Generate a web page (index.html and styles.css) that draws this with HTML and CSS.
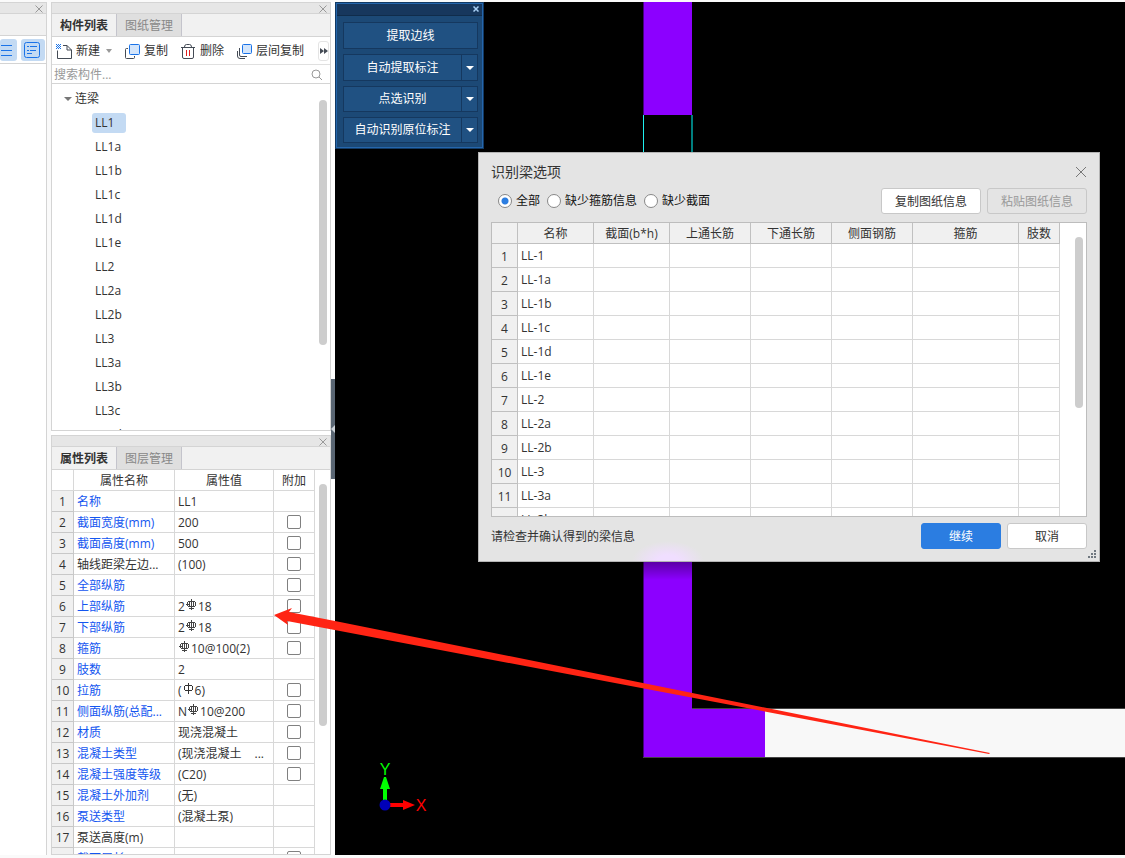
FILE: index.html
```html
<!DOCTYPE html>
<html lang="zh-CN">
<head>
<meta charset="utf-8">
<title>识别梁选项</title>
<link rel="stylesheet" href="styles.css">
</head>
<body>
<svg class="defs" aria-hidden="true">
  <symbol id="x" viewBox="0 0 10 10"><path d="M1.500 2.500l7 7M8.500 2.500l-7 7" fill="none" stroke="currentColor"/></symbol>
  <symbol id="hrb" viewBox="0 0 10 12"><path d="M5.500 0v11M2 2.500h7M1.500 3v4M9.500 3v4M2 7.500h7M3.500 2v6M7.500 2v6M0 5.500h3M3 9.500h5" fill="none" stroke="#444"/></symbol>
  <symbol id="hpb" viewBox="0 0 10 12"><path d="M5.500 0v11M2 2.500h7M1.500 3v4M9.500 3v4M2 7.500h7" fill="none" stroke="#333"/></symbol>
</svg>

<aside class="strip">
  <div class="dock-bar"><button class="close" aria-label="关闭"><svg><use href="#x"/></svg></button></div>
  <div class="strip-head"></div>
  <div class="strip-tools">
    <button class="view-btn" aria-label="列表"><svg width="22" height="22"><path d="M4 6.500h11M4 11.500h11M4 16.500h11" stroke="#1a73e8" fill="none"/></svg></button>
    <button class="view-btn" aria-label="详情"><svg width="22" height="22"><rect x="3.500" y="3.500" width="15" height="15" rx="2" stroke="#1a73e8" fill="none"/><path d="M6 7.500h2M9 7.500h7M6 11.500h2M9 11.500h6M6 14.500h5" stroke="#1a73e8"/></svg></button>
  </div>
</aside>

<main class="docks">
  <section class="dock">
    <div class="dock-bar"><button class="close" aria-label="关闭"><svg><use href="#x"/></svg></button></div>
    <div class="tabs"><button class="tab active">构件列表</button><button class="tab">图纸管理</button></div>
    <div class="toolbar">
      <button class="tool"><svg width="17" height="17"><path d="M7 2.500h4l4.500 4.500v8.500h-14v-8M11 2.500V7h4.500" fill="none" stroke="#444b55"/><path d="M0 1h1v1H0zM2 1h1v1H2zM4 1h1v1H4zM1 2h1v1H1zM3 2h1v1H3zM0 3h1v1H0zM2 3h1v1H2zM4 3h1v1H4zM1 4h1v1H1zM3 4h1v1H3zM0 5h1v1H0zM2 5h1v1H2zM4 5h1v1H4z" fill="#1a73e8"/></svg>新建<i class="caret"></i></button>
      <button class="tool"><svg width="17" height="17"><rect x="5.500" y="1.500" width="10" height="10" rx="1" fill="#d3e5fb" stroke="#1a73e8"/><path d="M4 5.500H2.500q-1 0-1 1v8q0 1 1 1h7q1 0 1-1V13" fill="none" stroke="#444b55"/></svg>复制</button>
      <button class="tool"><svg width="17" height="17"><path d="M1 4.500h14M4.500 4q0-2.500 2-2.500h3q2 0 2 2.500M2.500 5v9q0 1.500 1.500 1.500h8q1.500 0 1.500-1.500V5" fill="none" stroke="#444b55"/><path d="M6.500 7v6M9.500 7v6" stroke="#e02020"/></svg>删除</button>
      <button class="tool"><svg width="17" height="17"><rect x="6.500" y="1.500" width="9" height="9" rx="1" fill="#d3e5fb" stroke="#1a73e8"/><path d="M3.500 5v7q0 1.500 1.500 1.500h6M1.500 8v5q0 2.500 2.500 2.500h5" fill="none" stroke="#444b55"/></svg>层间复制</button>
      <button class="more" aria-label="更多"><svg width="8" height="6"><path d="M0 0l4 3-4 3zM4 0l4 3-4 3z" fill="#444b55"/></svg></button>
    </div>
    <div class="search"><input type="text" placeholder="搜索构件..." aria-label="搜索构件"><svg width="12" height="12"><circle cx="5" cy="5" r="4" fill="none" stroke="#999"/><path d="M8 8l3 3" stroke="#999"/></svg></div>
    <div class="tree-box">
      <ul class="tree">
        <li class="root"><i class="caret dark"></i>连梁</li>
        <li><span class="picked">LL1</span></li><li>LL1a</li><li>LL1b</li><li>LL1c</li><li>LL1d</li><li>LL1e</li>
        <li>LL2</li><li>LL2a</li><li>LL2b</li><li>LL3</li><li>LL3a</li><li>LL3b</li><li>LL3c</li><li>LL3d</li>
      </ul>
      <div class="track tree-track"><div class="thumb"></div></div>
    </div>
  </section>

  <section class="dock">
    <div class="dock-bar"><button class="close" aria-label="关闭"><svg><use href="#x"/></svg></button></div>
    <div class="tabs"><button class="tab active">属性列表</button><button class="tab">图层管理</button></div>
    <div class="props-box">
      <table class="props">
        <colgroup><col class="p-num"><col class="p-name"><col class="p-val"><col class="p-add"></colgroup>
        <thead><tr><th></th><th>属性名称</th><th>属性值</th><th>附加</th></tr></thead>
        <tbody>
          <tr><th>1</th><td class="key">名称</td><td>LL1</td><td></td></tr>
          <tr><th>2</th><td class="key">截面宽度(mm)</td><td>200</td><td><input type="checkbox" aria-label="截面宽度"></td></tr>
          <tr><th>3</th><td class="key">截面高度(mm)</td><td>500</td><td><input type="checkbox" aria-label="截面高度"></td></tr>
          <tr><th>4</th><td>轴线距梁左边...</td><td>(100)</td><td><input type="checkbox" aria-label="轴线距梁左边"></td></tr>
          <tr><th>5</th><td class="key">全部纵筋</td><td></td><td><input type="checkbox" aria-label="全部纵筋"></td></tr>
          <tr><th>6</th><td class="key">上部纵筋</td><td>2<svg class="bar"><use href="#hrb"/></svg>18</td><td><input type="checkbox" aria-label="上部纵筋"></td></tr>
          <tr><th>7</th><td class="key">下部纵筋</td><td>2<svg class="bar"><use href="#hrb"/></svg>18</td><td><input type="checkbox" aria-label="下部纵筋"></td></tr>
          <tr><th>8</th><td class="key">箍筋</td><td><svg class="bar"><use href="#hrb"/></svg>10@100(2)</td><td><input type="checkbox" aria-label="箍筋"></td></tr>
          <tr><th>9</th><td class="key">肢数</td><td>2</td><td></td></tr>
          <tr><th>10</th><td class="key">拉筋</td><td>(<svg class="bar"><use href="#hpb"/></svg>6)</td><td><input type="checkbox" aria-label="拉筋"></td></tr>
          <tr><th>11</th><td class="key">侧面纵筋(总配...</td><td>N<svg class="bar"><use href="#hrb"/></svg>10@200</td><td><input type="checkbox" aria-label="侧面纵筋"></td></tr>
          <tr><th>12</th><td class="key">材质</td><td>现浇混凝土</td><td><input type="checkbox" aria-label="材质"></td></tr>
          <tr><th>13</th><td class="key">混凝土类型</td><td><span class="split"><span>(现浇混凝土</span><span>...</span></span></td><td><input type="checkbox" aria-label="混凝土类型"></td></tr>
          <tr><th>14</th><td class="key">混凝土强度等级</td><td>(C20)</td><td><input type="checkbox" aria-label="混凝土强度等级"></td></tr>
          <tr><th>15</th><td class="key">混凝土外加剂</td><td>(无)</td><td></td></tr>
          <tr><th>16</th><td class="key">泵送类型</td><td>(混凝土泵)</td><td></td></tr>
          <tr><th>17</th><td>泵送高度(m)</td><td></td><td></td></tr>
          <tr><th></th><td class="key">截面周长</td><td></td><td><input type="checkbox" aria-label="截面周长"></td></tr>
        </tbody>
      </table>
      <div class="track props-track"><div class="thumb"></div></div>
    </div>
  </section>
</main>

<div class="splitter"><button class="grab" aria-label="折叠"><svg width="4" height="8"><path d="M4 0v8L0 4z" fill="#ccd2d8"/></svg></button></div>

<section class="canvas">
  <svg class="drawing" width="790" height="853">
    <defs><linearGradient id="shade" x2="0" y2="1"><stop offset="0" stop-opacity=".35"/><stop offset="1" stop-opacity="0"/></linearGradient></defs>
    <path d="M308.500 0h48.500v113h-48.500z" fill="#8c00ff"/>
    <path d="M308.500 113v40" stroke="#1ff0f0"/><path d="M357 113v40" stroke="#007f7f" stroke-width="2"/>
    <path d="M308.500 400H357v307h73v48H308.500z" fill="#8c00ff"/>
    <path d="M308 560h49v18h-49z" fill="url(#shade)"/>
    <path d="M430 707h360v48H430z" fill="#f8f8f8"/><path d="M357 706.500h433M308 755.500h482" stroke="#444"/>
    <path d="M50 803V783" stroke="#0f0" stroke-width="4"/><path d="M45 787l4-12h2l4 12z" fill="#0f0"/>
    <path d="M50 803h20" stroke="#f00" stroke-width="4"/><path d="M68 798l12 5-12 5z" fill="#f00"/>
    <circle cx="50" cy="803" r="5.500" fill="#0000b8"/>
    <text x="50" y="773" text-anchor="middle" class="axis axis-y">Y</text><text x="86" y="809" text-anchor="middle" class="axis axis-x">X</text>
  </svg>

  <div class="palette">
    <div class="palette-bar"><button class="palette-close" aria-label="关闭"><svg width="6" height="6"><path d="M.5.5l5 5M5.500.5l-5 5" stroke="#a9d0f5" stroke-width="1.500"/></svg></button></div>
    <div class="palette-body">
      <div class="cmd"><button>提取边线</button></div>
      <div class="cmd"><button>自动提取标注</button><button class="drop" aria-label="更多"><i class="caret white"></i></button></div>
      <div class="cmd"><button>点选识别</button><button class="drop" aria-label="更多"><i class="caret white"></i></button></div>
      <div class="cmd"><button>自动识别原位标注</button><button class="drop" aria-label="更多"><i class="caret white"></i></button></div>
    </div>
  </div>

  <div class="dialog" role="dialog" aria-labelledby="dlg-title">
    <header class="dlg-head"><h1 id="dlg-title">识别梁选项</h1><button class="dlg-close" aria-label="关闭"><svg width="12" height="12"><path d="M1 1l10 10M11 1L1 11" stroke="#777"/></svg></button></header>
    <div class="filter">
      <label><input type="radio" name="f" checked>全部</label>
      <label><input type="radio" name="f">缺少箍筋信息</label>
      <label><input type="radio" name="f">缺少截面</label>
      <span class="filter-actions"><button class="btn wide">复制图纸信息</button><button class="btn wide" disabled>粘贴图纸信息</button></span>
    </div>
    <div class="beams-box">
      <table class="beams">
        <colgroup><col class="b-num"><col class="b-name"><col class="b-name"><col class="b-bar"><col class="b-bar"><col class="b-bar"><col class="b-hoop"><col class="b-leg"></colgroup>
        <thead><tr><th></th><th>名称</th><th>截面(b*h)</th><th>上通长筋</th><th>下通长筋</th><th>侧面钢筋</th><th>箍筋</th><th>肢数</th></tr></thead>
        <tbody>
          <tr><th>1</th><td>LL-1</td><td></td><td></td><td></td><td></td><td></td><td></td></tr>
          <tr><th>2</th><td>LL-1a</td><td></td><td></td><td></td><td></td><td></td><td></td></tr>
          <tr><th>3</th><td>LL-1b</td><td></td><td></td><td></td><td></td><td></td><td></td></tr>
          <tr><th>4</th><td>LL-1c</td><td></td><td></td><td></td><td></td><td></td><td></td></tr>
          <tr><th>5</th><td>LL-1d</td><td></td><td></td><td></td><td></td><td></td><td></td></tr>
          <tr><th>6</th><td>LL-1e</td><td></td><td></td><td></td><td></td><td></td><td></td></tr>
          <tr><th>7</th><td>LL-2</td><td></td><td></td><td></td><td></td><td></td><td></td></tr>
          <tr><th>8</th><td>LL-2a</td><td></td><td></td><td></td><td></td><td></td><td></td></tr>
          <tr><th>9</th><td>LL-2b</td><td></td><td></td><td></td><td></td><td></td><td></td></tr>
          <tr><th>10</th><td>LL-3</td><td></td><td></td><td></td><td></td><td></td><td></td></tr>
          <tr><th>11</th><td>LL-3a</td><td></td><td></td><td></td><td></td><td></td><td></td></tr>
          <tr><th></th><td>LL-3b</td><td></td><td></td><td></td><td></td><td></td><td></td></tr>
        </tbody>
      </table>
      <div class="track beams-track"><div class="thumb"></div></div>
    </div>
    <footer class="dlg-foot"><span>请检查并确认得到的梁信息</span><button class="btn primary">继续</button><button class="btn">取消</button></footer>
    <svg class="grip" width="8" height="8"><path d="M6 0h2v2H6zM3 3h2v2H3zM6 3h2v2H6zM0 6h2v2H0zM3 6h2v2H3zM6 6h2v2H6z" fill="#707880"/></svg>
  </div>
</section>

<svg class="arrow" width="718" height="150"><path d="M0 8L18 1L15 5L66 15L716 146L715 147L66 24L13 14L14 18z" fill="#ff2414"/></svg>
</body>
</html>
```
FILE: styles.css
```css
* { box-sizing: border-box; }
body {
  margin: 0;
  height: 100vh;
  padding: 2px 0 3px;
  display: flex;
  position: relative;
  overflow: hidden;
  background: #fafafa;
  color: #333;
  font: 12px/20px "Open Sans", "Noto Sans CJK SC", sans-serif;
}
button, input { font: inherit; color: inherit; margin: 0; }
button { border: 0; padding: 0; background: none; }
svg { display: block; flex: none; }
.defs { position: absolute; width: 0; height: 0; }

.dock-bar {
  flex: none;
  height: 12px;
  display: flex;
  align-items: center;
  justify-content: flex-end;
  padding-right: 2px;
  background: #e6e6e6;
  border-top: 1px solid #d4d4d4;
  border-bottom: 1px solid #d4d4d4;
}
.close { color: #999; }
.close svg { width: 10px; height: 10px; }

.strip { flex: none; width: 47px; background: #fff; border-right: 1px solid #d4d4d4; }
.strip-head { height: 22px; background: #f1f1f1; border-bottom: 1px solid #d4d4d4; }
.strip-tools { display: flex; gap: 4px; height: 28px; align-items: center; border-bottom: 1px solid #d4d4d4; }
.view-btn { width: 24px; height: 22px; border-radius: 3px; background: #c3daf3; }
.view-btn:first-child { width: 17px; }
.view-btn:first-child svg { margin-left: -3px; }

.docks { flex: none; width: 280px; margin-left: 4px; display: grid; grid-template-rows: 429fr 420fr; gap: 4px; background: #fff; }
.dock { min-height: 0; display: flex; flex-direction: column; border: 1px solid #d4d4d4; border-top: 0; background: #fff; }
.tabs { flex: none; display: flex; height: 23px; background: #f1f1f1; border-bottom: 1px solid #d4d4d4; }
.tab { width: 65px; padding-top: 2px; border-right: 1px solid #c4c4cc; background: #dfdfdf; color: #888; }
.tab.active { background: #f1f1f1; color: #333; font-weight: 700; }

.toolbar { flex: none; display: flex; align-items: center; height: 28px; padding: 1px 0 0 4px; gap: 12px; border-bottom: 1px solid #e0e0e0; }
.tool { display: flex; align-items: center; gap: 3px; white-space: nowrap; }
.caret { flex: none; border: 3px solid transparent; border-top: 4px solid #999; border-bottom: 0; margin-left: 3px; }
.caret.dark { border-top-color: #777; border-left-width: 4px; border-right-width: 4px; margin: 0 3px 0 0; }
.caret.white { border-top-color: #fff; border-left-width: 4px; border-right-width: 4px; margin: 0; }
.more { flex: none; width: 11px; height: 20px; margin: 0 1px 0 auto; display: grid; place-items: center; border: 1px solid #e4e4e4; border-radius: 3px; }
.search { flex: none; display: flex; align-items: center; height: 19px; padding: 1px 7px 0 2px; border-bottom: 1px solid #d4d4d4; }
.search input { flex: 1; min-width: 0; height: 17px; border: 0; padding: 1px 0 0; outline: 0; background: none; }
.search input::placeholder { color: #999; opacity: 1; }

.tree-box { flex: 1; min-height: 0; display: flex; overflow: hidden; padding: 3px 3px 0 0; }
.tree { flex: 1; margin: 0; padding: 0; list-style: none; }
.tree li { height: 24px; line-height: 24px; padding-left: 43px; }
.tree .root { display: flex; align-items: center; padding-left: 12px; }
.picked { display: inline-block; width: 34px; line-height: 20px; margin-left: -3px; padding-left: 3px; border-radius: 3px; background: #c3daf3; }
.track { flex: none; width: 8px; }
.thumb { border-radius: 4px; background: #cdcdcd; }
.tree-track { padding-top: 13px; }
.tree-track .thumb { height: 245px; }

.props-box { flex: 1; min-height: 0; display: flex; justify-content: space-between; align-items: flex-start; overflow: hidden; padding-right: 3px; }
table { table-layout: fixed; border-collapse: separate; border-spacing: 0; }
th, td { padding: 0; font-weight: 400; white-space: nowrap; overflow: hidden; border: 0 solid #d8d8d8; border-width: 0 1px 1px 0; }
td { text-align: left; padding-left: 3px; }
.props { width: 263px; }
.p-num { width: 22px; }
.p-name { width: 101px; }
.p-val { width: 99px; }
.p-add { width: 41px; }
.props th, .props td { height: 21px; line-height: 18px; padding-top: 2px; }
.props tbody th { background: #f0f0f0; border-color: #c8c8c8; }
.props td:last-child { padding: 0; }
.key { color: #1456f0; }
.bar { display: inline-block; width: 10px; height: 12px; margin: 0 2px 0 1px; vertical-align: 0; }
.split { display: flex; justify-content: space-between; padding-right: 9px; }
.props-track { padding-top: 14px; }
.props-track .thumb { height: 242px; }
input[type="checkbox"] { appearance: none; display: block; width: 14px; height: 14px; margin: 0 auto; border: 1px solid #808080; border-radius: 2px; background: #fff; }

.splitter { flex: none; width: 4px; display: flex; align-items: center; background: #fff; }
.grab { width: 4px; height: 100px; background: #5a6673; display: grid; place-items: center; }

.canvas { flex: 1; min-width: 0; position: relative; overflow: hidden; background: #000; }
.drawing { position: absolute; left: 0; top: 0; }
.axis { font: 16px "Liberation Sans", sans-serif; }
.axis-y { fill: #0f0; }
.axis-x { fill: #f00; }

.palette { position: absolute; left: 0; top: 0; width: 149px; border: 1px solid #123a64; outline: 1px solid #2566ac; outline-offset: -2px; background: #1c4976; color: #fff; }
.palette-bar { height: 13px; padding-right: 4px; display: flex; align-items: center; justify-content: flex-end; background: #17375d; border-bottom: 1px solid #102c4b; }
.palette-body { padding: 6px 5px 5px 7px; display: grid; gap: 5px; }
.cmd { display: flex; height: 27px; border: 1px solid #15385f; background: #205182; }
.cmd:nth-child(n+3) { height: 26px; }
.cmd button { flex: 1; }
.cmd .drop { flex: none; width: 16px; display: grid; place-items: center; border-left: 1px solid #15385f; }

.dialog {
  position: absolute;
  left: 143px;
  top: 150px;
  width: 622px;
  padding: 0 12px 12px;
  border: 1px solid #b4b4b4;
  background: radial-gradient(ellipse 36px 20px at 189px 100%, #f0deff 30%, rgba(240, 222, 255, 0)) #e4e4e4;
}
.dlg-head { display: flex; align-items: center; justify-content: space-between; height: 35px; padding-top: 3px; }
.dlg-head h1 { margin: 0; font-size: 14px; font-weight: 400; }
.filter { display: flex; align-items: center; gap: 7px; height: 26px; padding-left: 7px; color: #111; }
.filter label { display: flex; align-items: center; gap: 4px; }
input[type="radio"] { appearance: none; width: 14px; height: 14px; border: 1px solid #888; border-radius: 50%; background: #fff; }
input[type="radio"]:checked { background: radial-gradient(circle, #2b7de1 3px, #fff 4px); }
.filter-actions { display: flex; gap: 6px; margin-left: auto; }
.btn { width: 80px; height: 26px; padding-top: 2px; border: 1px solid #c8c8c8; border-radius: 3px; background: #fff; color: #333; }
.btn.wide { width: 100px; }
.btn:disabled { background: #e4e4e4; color: #999; }
.btn.primary { background: #2b7de1; border-color: #2b7de1; color: #fff; }
.beams-box { margin-top: 8px; height: 295px; display: flex; justify-content: space-between; align-items: flex-start; overflow: hidden; padding-right: 3px; border: 1px solid #bdbdbd; background: #fff; }
.beams { width: 568px; }
.b-num { width: 26px; }
.b-name { width: 76px; }
.b-bar { width: 81px; }
.b-hoop { width: 106px; }
.b-leg { width: 41px; }
.beams th, .beams td { height: 24px; line-height: 23px; }
.beams tbody th { line-height: 21px; padding-top: 2px; }
.beams thead th { height: 21px; line-height: 18px; padding-top: 2px; }
.beams th { background: #f0f0f0; border-color: #c0c0c0; }
.beams-track { padding-top: 14px; }
.beams-track .thumb { height: 171px; }
.dlg-foot { display: flex; align-items: center; gap: 6px; margin-top: 6px; }
.dlg-foot span { flex: 1; padding-top: 2px; }
.grip { position: absolute; right: 3px; bottom: 3px; }
.arrow { position: absolute; left: 274px; top: 607px; pointer-events: none; }
```
